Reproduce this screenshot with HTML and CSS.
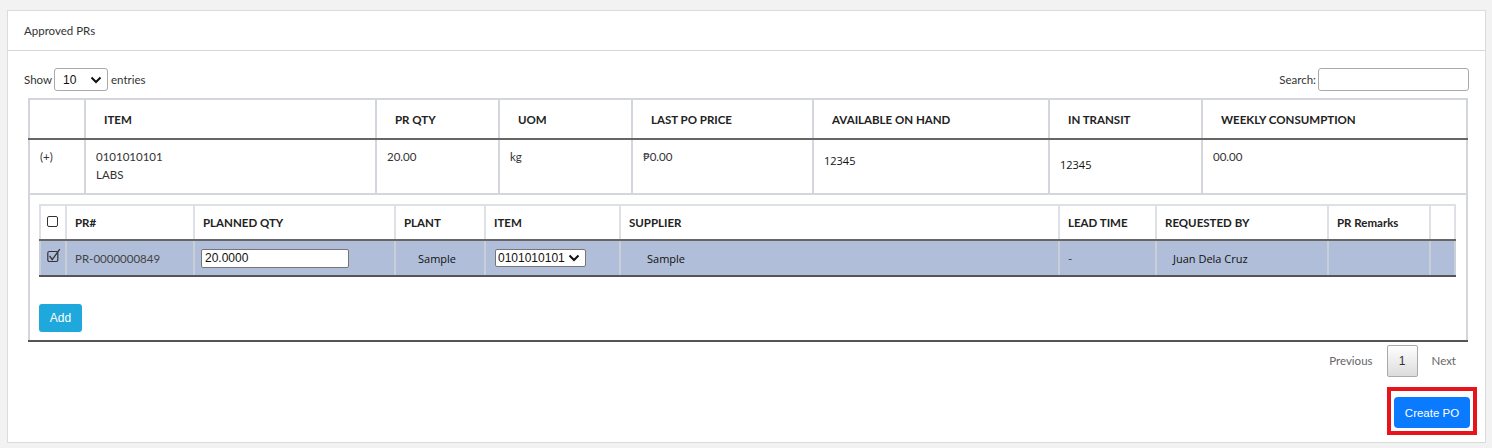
FILE: index.html
```html
<!DOCTYPE html>
<html>
<head>
<meta charset="utf-8">
<link rel="stylesheet" href="styles.css">
</head>
<body>
<div class="card">
  <div class="card-header">Approved PRs</div>
  <div class="card-body">
    <div class="toolbar">
      <label class="length">Show
        <span class="select-box"><span>10</span>
          <svg width="12" height="8" viewBox="0 0 12 8"><path d="M1.5 1.5 L6 6 L10.5 1.5" fill="none" stroke="#111" stroke-width="2"/></svg>
        </span>
        entries</label>
      <label class="search">Search:<span class="search-input"></span></label>
    </div>
    <table class="main">
      <colgroup>
        <col style="width:56px"><col style="width:291px"><col style="width:123px"><col style="width:133px">
        <col style="width:181px"><col style="width:236px"><col style="width:153px"><col style="width:265px">
      </colgroup>
      <thead>
        <tr>
          <th></th><th>ITEM</th><th>PR QTY</th><th>UOM</th><th>LAST PO PRICE</th><th>AVAILABLE ON HAND</th><th>IN TRANSIT</th><th>WEEKLY CONSUMPTION</th>
        </tr>
      </thead>
      <tbody>
        <tr class="item-row">
          <td>(+)</td>
          <td>0101010101<br>LABS</td>
          <td>20.00</td>
          <td>kg</td>
          <td>₱0.00</td>
          <td><span class="alt alt-1">12345</span></td>
          <td><span class="alt alt-2">12345</span></td>
          <td>00.00</td>
        </tr>
        <tr class="detail-row">
          <td colspan="8" class="detail-cell">
            <table class="sub">
              <colgroup>
                <col style="width:26px"><col style="width:128px"><col style="width:201px"><col style="width:90px"><col style="width:135px">
                <col style="width:439px"><col style="width:97px"><col style="width:172px"><col style="width:102px"><col style="width:25px">
              </colgroup>
              <thead>
                <tr>
                  <th class="chk"><span class="box"></span></th><th>PR#</th><th>PLANNED QTY</th><th>PLANT</th><th>ITEM</th><th>SUPPLIER</th><th>LEAD TIME</th><th>REQUESTED BY</th><th>PR Remarks</th><th></th>
                </tr>
              </thead>
              <tbody>
                <tr class="selected">
                  <td class="chk"><svg width="15" height="15" viewBox="0 0 15 15"><rect x="0.8" y="3.5" width="10" height="10" rx="1.5" fill="none" stroke="#333" stroke-width="1.2"/><path d="M2.6 7.8 L5.2 11.6 L12.8 1.2" fill="none" stroke="#333" stroke-width="1.3"/></svg></td>
                  <td>PR-0000000849</td>
                  <td class="qty"><span class="qty-input">20.0000</span></td>
                  <td class="center"><span class="alt">Sample</span></td>
                  <td class="itm"><span class="item-select"><span>0101010101</span><svg width="12" height="8" viewBox="0 0 12 8"><path d="M1.5 1.5 L6 6 L10.5 1.5" fill="none" stroke="#111" stroke-width="2"/></svg></span></td>
                  <td class="supplier"><span class="alt">Sample</span></td>
                  <td>-</td>
                  <td class="req"><span class="alt">Juan Dela Cruz</span></td>
                  <td></td>
                  <td></td>
                </tr>
              </tbody>
            </table>
            <button class="btn-add">Add</button>
          </td>
        </tr>
      </tbody>
    </table>
    <div class="paging">
      <span class="page-link">Previous</span>
      <span class="page-current">1</span>
      <span class="page-link">Next</span>
    </div>
    <div class="actions">
      <div class="highlight"><button class="btn-create">Create PO</button></div>
    </div>
  </div>
</div>
</body>
</html>
```
FILE: styles.css
```css
html, body {
  margin: 0;
  padding: 0;
}
body {
  background: #f2f2f2;
  font-family: Lato, "Open Sans", sans-serif;
  font-size: 11.5px;
  color: #333;
  height: 448px;
  overflow: hidden;
}
.card {
  margin: 10px 6px 0 7px;
  height: 433px;
  box-sizing: border-box;
  background: #fff;
  border: 1px solid #d9dcdf;
}
.card-header {
  height: 39px;
  line-height: 39px;
  padding-left: 16px;
  border-bottom: 1px solid #d3d8dd;
  color: #333;
}
.card-body {
  padding: 17px 16px 0 16px;
}
.toolbar {
  display: flex;
  justify-content: space-between;
  align-items: center;
  height: 23px;
}
.length, .search {
  display: flex;
  align-items: center;
  color: #333;
}
.select-box {
  display: inline-flex;
  align-items: center;
  justify-content: space-between;
  box-sizing: border-box;
  width: 54px;
  height: 23px;
  margin: 0 3px 0 2px;
  padding: 0 5px 0 8px;
  border: 1px solid #aaa;
  border-radius: 3px;
  font-family: "Liberation Sans", Arial, sans-serif;
  font-size: 12px;
  color: #111;
}
.search-input {
  display: inline-block;
  box-sizing: border-box;
  width: 151px;
  height: 23px;
  margin-left: 2px;
  border: 1px solid #aaa;
  border-radius: 3px;
}
table {
  border-collapse: collapse;
  table-layout: fixed;
}
.main {
  width: 1438px;
  margin: 7px 0 0 4px;
}
.main > thead > tr > th {
  height: 38px;
  padding: 0 18px;
  text-align: left;
  font-weight: 700;
  color: #222;
  border: 2px solid #d3d7dc;
  border-bottom: 2px solid #666;
}
.item-row > td {
  height: 45px;
  padding: 8px 10px 0 10px;
  vertical-align: top;
  line-height: 18px;
  border: 2px solid #d3d7dc;
  color: #333;
}
.alt {
  font-family: "Open Sans", "Noto Sans", sans-serif;
  font-size: 11px;
  color: #111;
}
.alt-1 {
  display: inline-block;
  padding-top: 4px;
}
.alt-2 {
  display: inline-block;
  padding-top: 8px;
}
.detail-cell {
  padding: 9px 10px 8px 9px;
  border: 2px solid #d3d7dc;
  border-bottom: 2px solid #555;
}
.sub {
  width: 1415px;
}
.sub > thead > tr > th {
  height: 33px;
  padding: 0 8px;
  text-align: left;
  font-weight: 700;
  color: #222;
  border: 2px solid #dde0e4;
  border-bottom: 2px solid #666;
}
.sub .chk {
  padding: 0 0 0 6px;
}
.box {
  display: block;
  width: 9px;
  height: 9px;
  border: 1.3px solid #333;
  border-radius: 2px;
  margin-top: -2px;
}
.selected > td {
  height: 34px;
  background: #b0bed9;
  padding: 0 8px;
  border: 2px solid #c9cfd9;
  border-bottom: 2px solid #555;
  color: #444;
  vertical-align: middle;
}
.selected > td.chk {
  padding: 0 0 0 6px;
}
.selected > td.chk svg {
  display: block;
  margin-top: -6px;
}
.selected > td.qty {
  padding-left: 6px;
}
.qty-input {
  display: block;
  box-sizing: border-box;
  width: 148px;
  height: 19px;
  line-height: 17px;
  padding-left: 3px;
  background: #fff;
  border: 1px solid #767676;
  border-radius: 2px;
  font-family: "Liberation Sans", Arial, sans-serif;
  font-size: 12px;
  color: #111;
}
.selected > td.center {
  text-align: center;
  padding-right: 14px;
}
.selected > td.itm {
  padding-left: 9px;
}
.item-select {
  display: flex;
  align-items: center;
  justify-content: space-between;
  box-sizing: border-box;
  width: 91px;
  height: 18px;
  padding: 0 5px 0 2px;
  background: #fff;
  border: 1px solid #767676;
  border-radius: 2px;
  font-family: "Liberation Sans", Arial, sans-serif;
  font-size: 12px;
  color: #111;
}
.selected > td.supplier {
  padding-left: 26px;
}
.selected > td.req {
  padding-left: 16px;
}
.btn-add {
  display: block;
  margin-top: 27px;
  width: 43px;
  height: 28px;
  padding: 0;
  border: 0;
  border-radius: 3px;
  background: #1ea8db;
  color: #fff;
  font-family: "Liberation Sans", Arial, sans-serif;
  font-size: 12px;
}
.paging {
  display: flex;
  justify-content: flex-end;
  align-items: center;
  margin-top: 2px;
  height: 33px;
}
.page-link {
  padding: 0 13px;
  color: #666;
}
.page-current {
  display: flex;
  align-items: center;
  justify-content: center;
  box-sizing: border-box;
  width: 31px;
  height: 32px;
  margin: 0 1px;
  border: 1px solid #a9a9a9;
  border-radius: 2px;
  background: linear-gradient(#fefefe, #dcdcdc);
  font-family: "Liberation Sans", Arial, sans-serif;
  font-size: 12px;
  color: #333;
}
.actions {
  display: flex;
  justify-content: flex-end;
  margin-top: 10px;
  margin-right: -8px;
}
.highlight {
  border: 4px solid #e8141b;
  padding: 6px 3px 3px 3px;
}
.btn-create {
  display: block;
  width: 76px;
  height: 31px;
  padding: 0;
  border: 0;
  border-radius: 4px;
  background: #0a7bff;
  color: #fff;
  font-family: "Liberation Sans", Arial, sans-serif;
  font-size: 11.5px;
}
```
